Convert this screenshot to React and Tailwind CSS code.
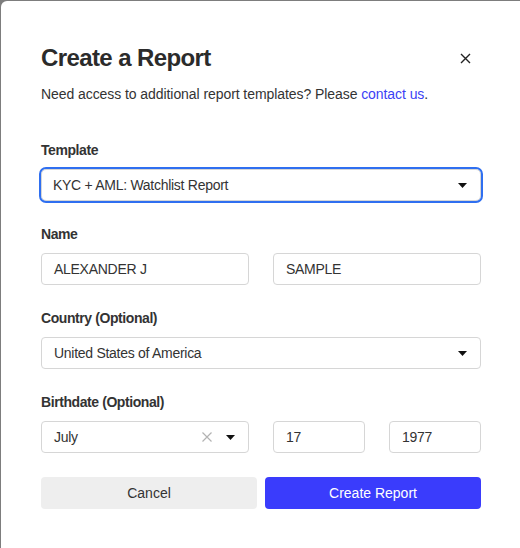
const Caret = () => (
  <svg width="9" height="5" viewBox="0 0 9 5" className="shrink-0">
    <path d="M0 0h9L4.5 5z" fill="#111" />
  </svg>
);

const Field = ({ label, children, className = '' }) => (
  <div className={className}>
    <div className="text-[14px] leading-5 font-bold text-[#333] mb-[9px] tracking-[-0.03em]">{label}</div>
    {children}
  </div>
);

const Box = ({ children, className = '' }) => (
  <div
    className={`h-8 flex items-center border border-[#d6d6d6] rounded-[4px] bg-white pl-[12px] pr-[13px] text-[14px] text-[#333] tracking-[-0.02em] ${className}`}
  >
    {children}
  </div>
);

export default function App() {
  return (
    <div className="w-[520px] h-[548px] bg-[#7d7d7d] pt-px pl-px overflow-hidden">
      <div
        className="w-[520px] h-[548px] bg-white rounded-tl-[6px] px-10 pt-[41px]"
        style={{ fontFamily: '"Liberation Sans", Arial, sans-serif' }}
      >
        <div className="flex items-center justify-between h-8">
          <h1 className="text-[24px] leading-8 font-bold text-[#2b2b2b] tracking-[-0.025em]">
            Create a Report
          </h1>
          <svg width="11" height="11" viewBox="0 0 11 11" className="mr-[10px]">
            <path d="M1 1l9 9M10 1l-9 9" stroke="#222" strokeWidth="1.4" />
          </svg>
        </div>
        <p className="mt-[10px] text-[14px] leading-5 text-[#333] tracking-[-0.005em]">
          Need access to additional report templates? Please{' '}
          <span className="text-[#3b3ff5]">contact us</span>.
        </p>

        <div className="w-[440px]">
          <Field label="Template" className="mt-9">
            <div className="h-8 flex items-center justify-between rounded-[5px] border border-[#d6d6d6] outline-2 outline-[#2f6ff0] pl-[11px] pr-[13px] text-[14px] text-[#333] tracking-[-0.02em]">
              <span>KYC + AML: Watchlist Report</span>
              <Caret />
            </div>
          </Field>

          <Field label="Name" className="mt-[23px]">
            <div className="flex gap-6">
              <Box className="flex-1">ALEXANDER J</Box>
              <Box className="flex-1">SAMPLE</Box>
            </div>
          </Field>

          <Field label="Country (Optional)" className="mt-[23px]">
            <Box className="justify-between pl-[11px]">
              <span>United States of America</span>
              <Caret />
            </Box>
          </Field>

          <Field label="Birthdate (Optional)" className="mt-[23px]">
            <div className="flex gap-6">
              <Box className="w-[208px] pl-[11px] pr-[12px]">
                <span className="flex-1">July</span>
                <svg width="10" height="10" viewBox="0 0 10 10" className="mr-[14px]">
                  <path d="M0.5 0.5l9 9M9.5 0.5l-9 9" stroke="#b3b3b3" strokeWidth="1.2" />
                </svg>
                <Caret />
              </Box>
              <Box className="w-[92px]">17</Box>
              <Box className="w-[92px]">1977</Box>
            </div>
          </Field>

          <div className="mt-6 flex gap-2">
            <button className="flex-1 h-8 rounded-[4px] bg-[#eeeeee] text-[14px] text-[#333]">
              Cancel
            </button>
            <button className="flex-1 h-8 rounded-[4px] bg-[#3a3cfc] text-[14px] text-white">
              Create Report
            </button>
          </div>
        </div>
      </div>
    </div>
  );
}
